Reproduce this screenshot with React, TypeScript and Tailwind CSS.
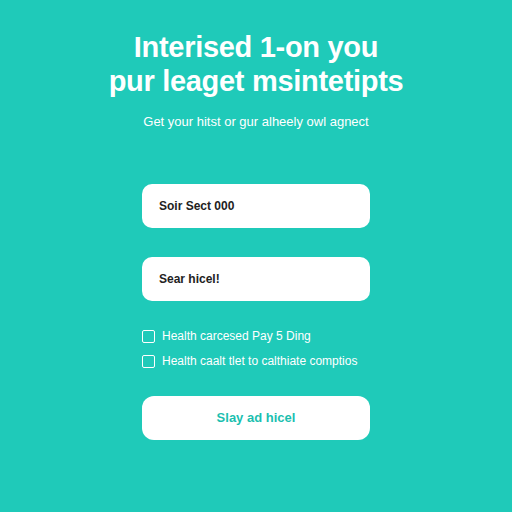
export default function App() {
  return (
    <div
      className="w-[512px] h-[512px] bg-[#1fcab9] flex flex-col items-center text-white"
      style={{ fontFamily: '"Liberation Sans", Arial, sans-serif' }}
    >
      <h1 className="mt-[30px] text-[29px] leading-[34px] font-bold text-center tracking-[-0.3px]">
        Interised 1-on you
        <br />
        pur leaget msintetipts
      </h1>
      <p className="mt-[16px] text-[13px] leading-[16px] text-center">
        Get your hitst or gur alheely owl agnect
      </p>

      <div className="mt-[54px] w-[228px] flex flex-col">
        <div className="h-[44px] bg-white rounded-[10px] flex items-center px-[17px] text-[12px] font-bold text-[#222]">
          Soir Sect 000
        </div>
        <div className="mt-[29px] h-[44px] bg-white rounded-[10px] flex items-center px-[17px] text-[12px] font-bold text-[#222]">
          Sear hicel!
        </div>

        <div className="mt-[26px] flex flex-col gap-[7px] text-[12px]">
          <label className="flex items-center gap-[7px]">
            <span className="w-[13px] h-[13px] border-[1.5px] border-white rounded-[2px]" />
            Health carcesed Pay 5 Ding
          </label>
          <label className="flex items-center gap-[7px]">
            <span className="w-[13px] h-[13px] border-[1.5px] border-white rounded-[2px]" />
            Health caalt tlet to calthiate comptios
          </label>
        </div>

        <button className="mt-[26px] h-[44px] bg-white rounded-[12px] text-[13px] font-bold text-[#1bbfb0]">
          Slay ad hicel
        </button>
      </div>
    </div>
  );
}
